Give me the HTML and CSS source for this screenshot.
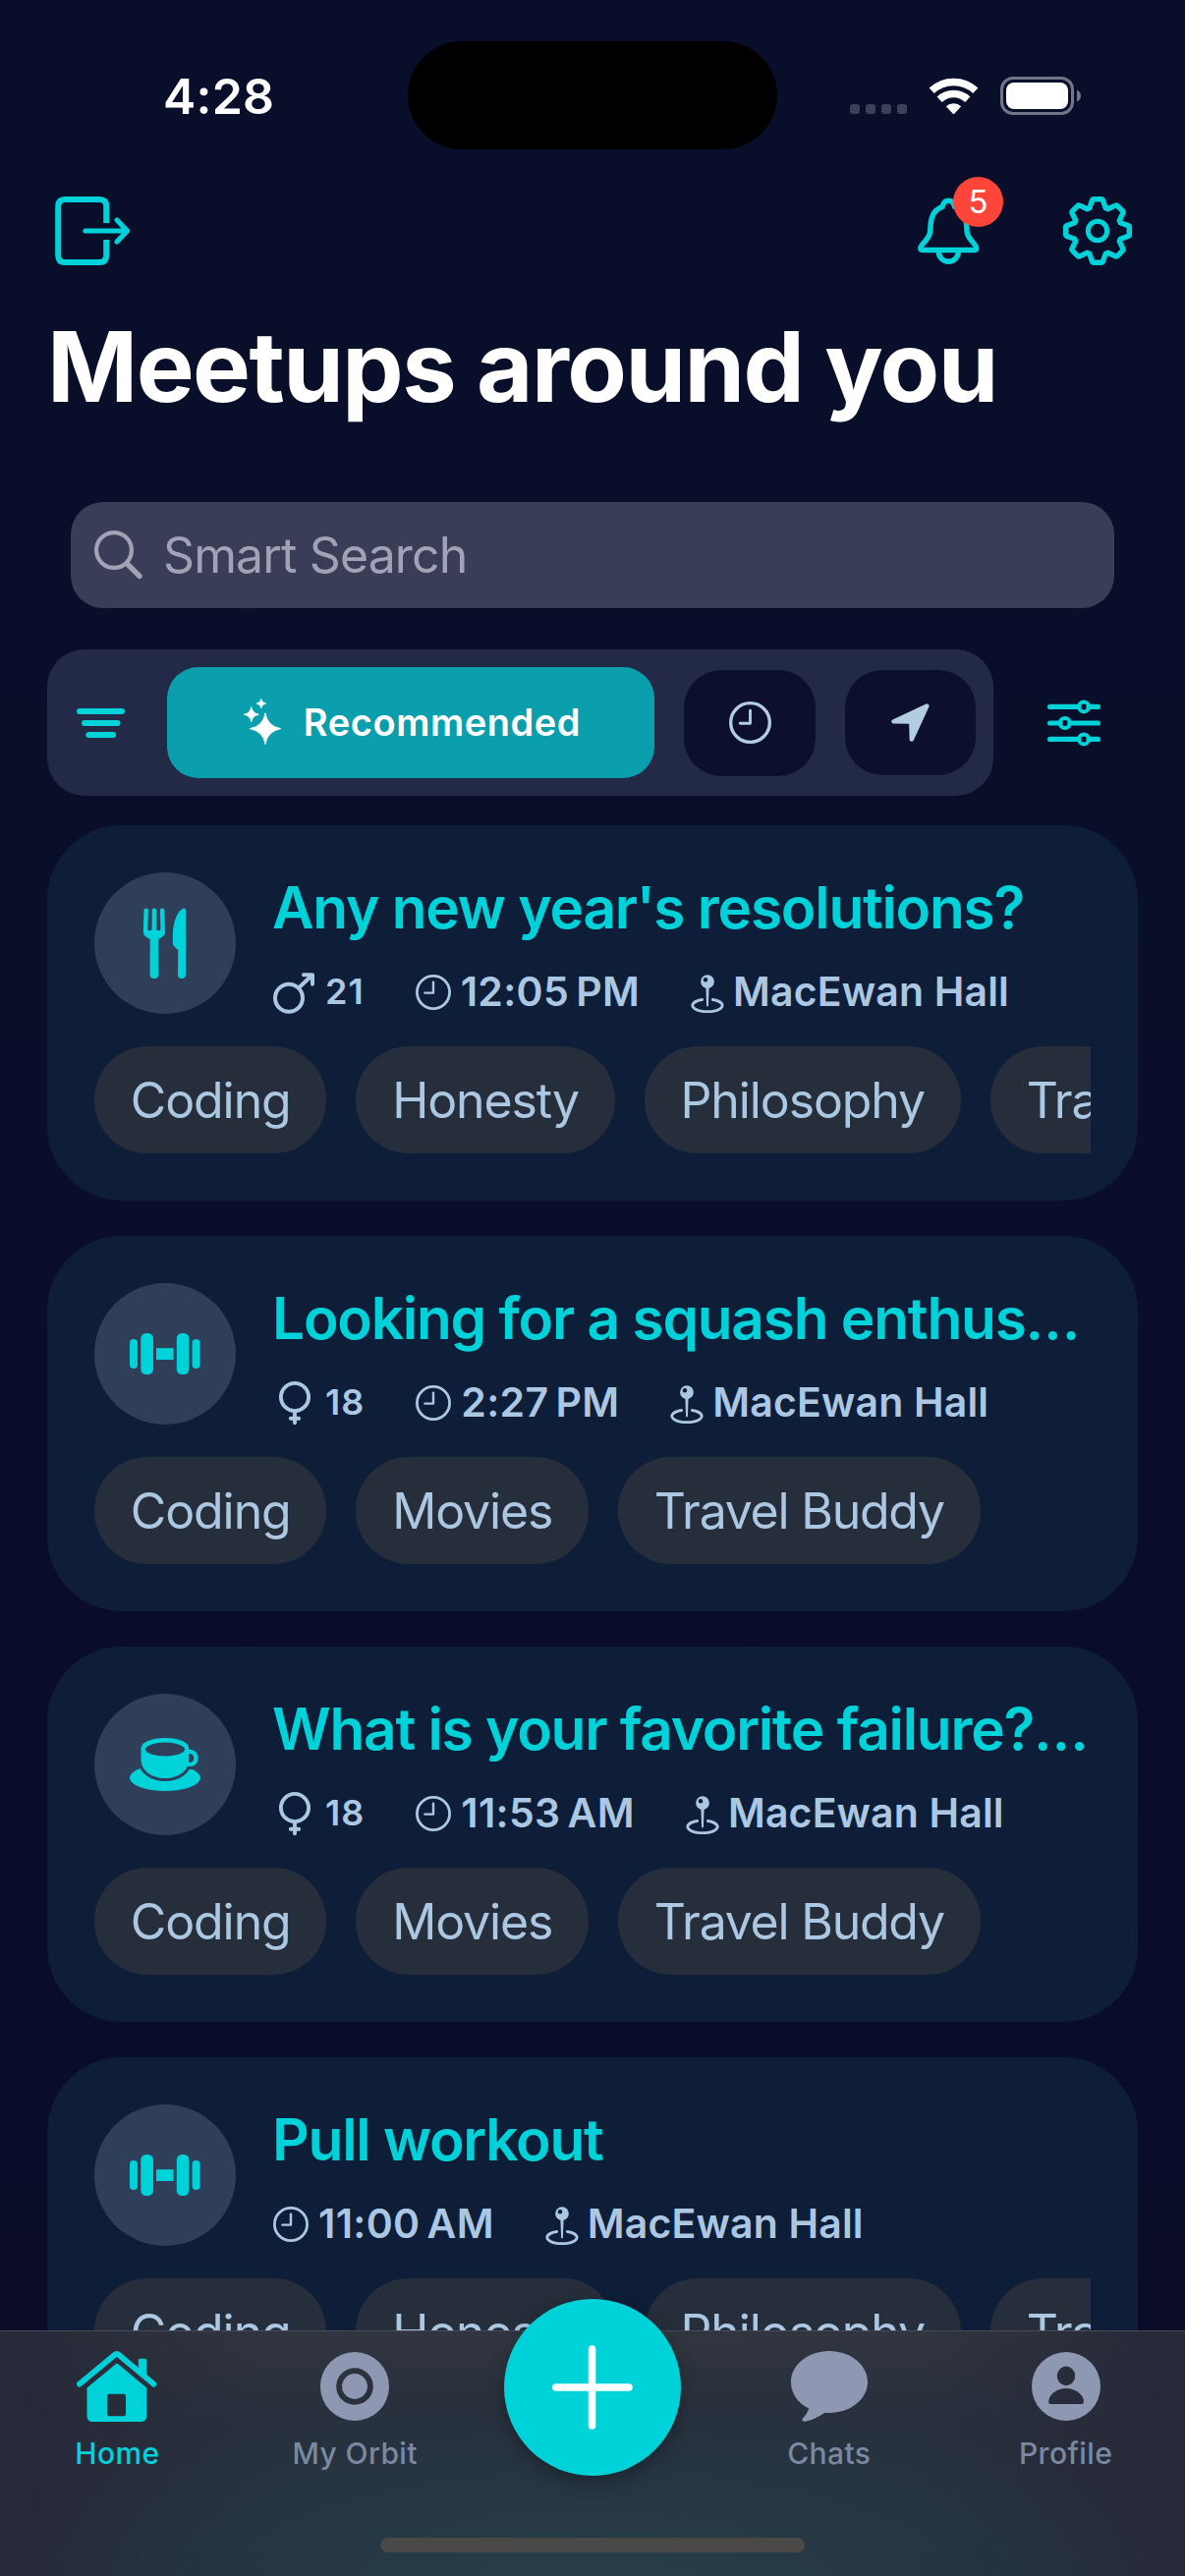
FILE: index.html
```html
<!DOCTYPE html>
<html lang="en">
<head>
<meta charset="utf-8">
<title>Meetups around you</title>
<link rel="stylesheet" href="styles.css">
</head>
<body>
<svg class="sprite" aria-hidden="true">
  <symbol id="clock" viewBox="0 0 36 36"><g fill="none" stroke="currentColor" stroke-width="2.8" stroke-linecap="round" stroke-linejoin="round"><circle cx="18" cy="18" r="16.6"/><path d="M18 7.6V18.6H9.4" stroke-width="2.4"/></g></symbol>
  <symbol id="pin" viewBox="0 0 34 40"><path fill="currentColor" fill-rule="evenodd" d="M17 .2a6.9 6.9 0 1 0 0 13.8a6.9 6.9 0 1 0 0-13.8ZM15 2.9a2.3 2.3 0 1 1 0 4.6a2.3 2.3 0 1 1 0-4.6Z"/><path fill="currentColor" d="M15.4 13h3.2l-.7 19.2h-1.8Z"/><path fill="none" stroke="currentColor" stroke-width="2.8" stroke-linecap="round" d="M11.6 25.5A15.2 6.3 0 1 0 22.4 25.5"/></symbol>
  <symbol id="male" viewBox="0 0 42 50"><g fill="none" stroke="currentColor" stroke-width="4" stroke-linecap="round" stroke-linejoin="round"><circle cx="16" cy="31.8" r="14"/><path d="M26.5 21 39 9.2M31 8.2H40V17.8"/></g></symbol>
  <symbol id="female" viewBox="0 0 42 50"><g fill="none" stroke="currentColor" stroke-width="3.9" stroke-linecap="round"><circle cx="22" cy="20" r="14.1"/><path d="M22 35V46.2M17.8 41.7H26.2"/></g></symbol>
  <symbol id="dumbbell" viewBox="0 0 72 42"><g fill="currentColor"><rect y="6" width="8" height="30" rx="4"/><rect x="11.3" width="12.7" height="42" rx="5.5"/><rect x="27" y="15.2" width="17.6" height="11.8"/><rect x="47.8" width="12.7" height="42" rx="5.5"/><rect x="63.6" y="6" width="8" height="30" rx="4"/></g></symbol>
</svg>

<div class="screen">
  <div class="status">
    <div class="time">4:28</div>
    <div class="island"></div>
    <div class="indicators">
      <svg width="58" height="38" viewBox="0 0 58 38" fill="#3d4058"><rect y="27" width="10" height="10" rx="3"/><rect x="16" y="27" width="10" height="10" rx="3"/><rect x="32" y="27" width="10" height="10" rx="3"/><rect x="48" y="27" width="10" height="10" rx="3"/></svg>
      <svg class="wifi" width="51" height="38" viewBox="0 0 51 38"><g fill="none" stroke="#fff"><path stroke-width="7.6" d="M3.2 13.3A32.8 32.8 0 0 1 47.8 13.3"/><path stroke-width="7.4" d="M11.2 22.2A20.8 20.8 0 0 1 39.8 22.2"/></g><path fill="#fff" d="M17.8 29.2A11.3 11.3 0 0 1 33.2 29.2L26.5 36.6Q25.5 37.6 24.5 36.6Z"/></svg>
      <svg width="82" height="39" viewBox="0 0 82 39"><rect x="1.5" y="1.5" width="72" height="36" rx="11.5" fill="none" stroke="#73768a" stroke-width="3"/><rect x="6" y="6" width="63" height="27" rx="8" fill="#fff"/><path fill="#73768a" d="M78 13.5Q82 15.5 82 19.5T78 25.5Z"/></svg>
    </div>
  </div>

  <div class="toolbar">
    <svg width="80" height="74" viewBox="0 0 80 74" fill="none" stroke="currentColor"><path stroke-width="6" d="M54.2 29V12q0-7-7-7H12.2q-7 0-7 7V62q0 7 7 7H47.2q7 0 7-7V46"/><path stroke-width="5.2" stroke-linecap="round" stroke-linejoin="round" d="M33 37H75.5M65 26 75.5 37 65 48"/></svg>
    <div class="actions">
      <div class="bell">
        <svg width="63" height="70" viewBox="0 0 63 70" fill="none" stroke="currentColor" stroke-width="5.4" stroke-linejoin="round"><path d="M31.3 4.2C27.5 4.2 26 6.5 25 10.5C17 13 13.5 20 13 30C12.8 38 12 40 8 45C5 48.5 2.8 50.5 2.8 52.5Q2.8 54.5 5.5 54.5H57Q59.8 54.5 59.8 52.5C59.8 50.5 57.5 48.5 54.7 45C50.7 40 49.9 38 49.7 30C49.2 20 45.7 13 37.7 10.5C36.7 6.5 35 4.2 31.3 4.2Z"/><path d="M21.3 56C21.3 62 25.8 66.3 31.3 66.3S41.3 62 41.3 56"/></svg>
        <span class="badge">5</span>
      </div>
      <svg width="70" height="70" viewBox="-35 -35 70 70" fill="none" stroke="currentColor" stroke-width="5.4" stroke-linejoin="round"><path d="M-8.3-23.2-5.4-31.2Q-5-32.3-3.8-32.3H3.8Q5-32.3 5.4-31.2L8.3-23.2L10.5-22.3 18.2-25.9Q19.3-26.4 20.1-25.6L25.6-20.1Q26.4-19.3 25.9-18.2L22.3-10.5L23.2-8.3 31.2-5.4Q32.3-5 32.3-3.8V3.8Q32.3 5 31.2 5.4L23.2 8.3L22.3 10.5 25.9 18.2Q26.4 19.3 25.6 20.1L20.1 25.6Q19.3 26.4 18.2 25.9L10.5 22.3L8.3 23.2 5.4 31.2Q5 32.3 3.8 32.3H-3.8Q-5 32.3-5.4 31.2L-8.3 23.2L-10.5 22.3-18.2 25.9Q-19.3 26.4-20.1 25.6L-25.6 20.1Q-26.4 19.3-25.9 18.2L-22.3 10.5L-23.2 8.3-31.2 5.4Q-32.3 5-32.3 3.8V-3.8Q-32.3-5-31.2-5.4L-23.2-8.3L-22.3-10.5-25.9-18.2Q-26.4-19.3-25.6-20.1L-20.1-25.6Q-19.3-26.4-18.2-25.9L-10.5-22.3Z"/><circle r="9.7" stroke-width="5"/></svg>
    </div>
  </div>

  <h1 class="title">Meetups around you</h1>

  <div class="search">
    <svg width="50" height="50" viewBox="0 0 50 50" fill="none" stroke="currentColor" stroke-linecap="round"><circle cx="20" cy="20" r="17.9" stroke-width="4.2"/><path stroke-width="5.4" d="M33.5 34 46 46.4"/></svg>
    <span>Smart Search</span>
  </div>

  <div class="filters">
    <div class="segments">
      <svg class="sort" width="49" height="30" viewBox="0 0 49 30" stroke="currentColor" stroke-width="6" stroke-linecap="round"><path d="M3 3H46M8 15H41.5M12.4 27H37"/></svg>
      <div class="segment active">
        <svg width="39" height="48" viewBox="0 0 39 48" fill="#fff" stroke="#fff" stroke-width=".8" stroke-linejoin="round"><path d="M22 14.8Q24.2 28.2 37.8 30.7Q24.2 33.2 22 46.6Q19.8 33.2 6.2 30.7Q19.8 28.2 22 14.8Z"/><path d="M7.8 8.6Q8.8 15 15.3 16.2Q8.8 17.4 7.8 23.8Q6.8 17.4.3 16.2Q6.8 15 7.8 8.6Z"/><path d="M17.8.5Q18.4 4.4 22.6 5.1Q18.4 5.8 17.8 9.7Q17.2 5.8 13 5.1Q17.2 4.4 17.8.5Z"/></svg>
        <span>Recommended</span>
      </div>
      <div class="segment"><svg width="43" height="43"><use href="#clock"/></svg></div>
      <div class="segment"><svg width="39" height="39" viewBox="0 0 39 39"><path fill="currentColor" stroke="currentColor" stroke-width="4.4" stroke-linejoin="round" d="M36.4 2.6 2.4 18.4 20.3 18.5 20.8 36.6Z"/></svg></div>
    </div>
    <svg class="tune" width="54" height="48" viewBox="0 0 54 48" fill="none" stroke="currentColor" stroke-width="5.2" stroke-linecap="round"><path d="M2.6 7.4H32M42 7.4H51.4M2.6 24H13M23 24H51.4M2.6 40.4H32M42 40.4H51.4"/><g stroke-width="4"><circle cx="37" cy="7.4" r="5"/><circle cx="17.8" cy="24" r="5"/><circle cx="37" cy="40.4" r="5"/></g></svg>
  </div>

  <div class="list">
    <article class="card">
      <div class="head">
        <div class="avatar"><svg width="44" height="72" viewBox="0 0 44 72"><path stroke="currentColor" stroke-width="4.4" stroke-linecap="round" d="M2.7 2.8 2.1 22M10.9 2.8V22M19.1 2.8 19.7 22"/><path fill="currentColor" d="M-.1 20V25q0 4 6.8 7L6.6 68q0 4 4.3 4t4.3-4L15 32q6.9-3 6.9-7V20H17.5V23H13.1V20H8.7V23H4.3V20ZM43 3q0-2.8-2.2-2.4C35 2.5 30 14 29.8 28V36q0 3 5.5 7L35 68q0 4 4 4t4-4Z"/></svg></div>
        <div class="info">
          <h2>Any new year's resolutions?</h2>
          <div class="meta">
            <span class="gender"><svg width="42" height="50"><use href="#male"/></svg>21</span>
            <span class="when"><svg width="36" height="36"><use href="#clock"/></svg>12:05&#8239;PM</span>
            <span class="where"><svg width="34" height="40"><use href="#pin"/></svg>MacEwan Hall</span>
          </div>
        </div>
      </div>
      <div class="chips"><span>Coding</span><span>Honesty</span><span>Philosophy</span><span>Travel Buddy</span></div>
    </article>

    <article class="card">
      <div class="head">
        <div class="avatar"><svg width="72" height="42"><use href="#dumbbell"/></svg></div>
        <div class="info">
          <h2>Looking for a squash enthus…</h2>
          <div class="meta">
            <span class="gender"><svg width="42" height="50"><use href="#female"/></svg>18</span>
            <span class="when"><svg width="36" height="36"><use href="#clock"/></svg>2:27&#8239;PM</span>
            <span class="where"><svg width="34" height="40"><use href="#pin"/></svg>MacEwan Hall</span>
          </div>
        </div>
      </div>
      <div class="chips"><span>Coding</span><span>Movies</span><span>Travel Buddy</span></div>
    </article>

    <article class="card">
      <div class="head">
        <div class="avatar"><svg width="72" height="54" viewBox="0 0 72 54"><ellipse cx="36" cy="40.6" rx="36" ry="13.4" fill="currentColor"/><g fill="none" stroke="#2f3f59" stroke-width="6"><path d="M11.5 11V22C11.5 33 22 41 36 41S60.3 33 60.3 22V11"/><path stroke-width="10" d="M60 27C65 27.5 67.4 24 67.4 20.5"/></g><path fill="none" stroke="currentColor" stroke-width="4.2" d="M59 14.2C64 13 67.4 16 67.4 20.5C67.4 25.5 64 28 58 26.6"/><path fill="currentColor" d="M11.5 11C11.5 4 22 0 36 0S60.3 4 60.3 11V22C60.3 33 50 41 36 41S11.5 33 11.5 22Z"/><ellipse cx="36" cy="11.6" rx="20" ry="7" fill="#2f3f59"/></svg></div>
        <div class="info">
          <h2>What is your favorite failure?…</h2>
          <div class="meta">
            <span class="gender"><svg width="42" height="50"><use href="#female"/></svg>18</span>
            <span class="when"><svg width="36" height="36"><use href="#clock"/></svg>11:53&#8239;AM</span>
            <span class="where"><svg width="34" height="40"><use href="#pin"/></svg>MacEwan Hall</span>
          </div>
        </div>
      </div>
      <div class="chips"><span>Coding</span><span>Movies</span><span>Travel Buddy</span></div>
    </article>

    <article class="card">
      <div class="head">
        <div class="avatar"><svg width="72" height="42"><use href="#dumbbell"/></svg></div>
        <div class="info">
          <h2>Pull workout</h2>
          <div class="meta">
            <span class="when"><svg width="36" height="36"><use href="#clock"/></svg>11:00&#8239;AM</span>
            <span class="where"><svg width="34" height="40"><use href="#pin"/></svg>MacEwan Hall</span>
          </div>
        </div>
      </div>
      <div class="chips"><span>Coding</span><span>Honesty</span><span>Philosophy</span><span>Travel Buddy</span></div>
    </article>
  </div>

  <nav class="tabbar">
    <div class="tabs">
      <div class="tab current">
        <svg width="82" height="72" viewBox="0 0 82 72"><path fill="none" stroke="currentColor" stroke-width="5.8" stroke-linecap="round" stroke-linejoin="round" d="M3 33.6 38.6 4Q40.8 2 43 4L78.4 33.6"/><path fill="currentColor" d="M62.8 9.7q0-2 2-2h4.4q2 0 2 2V28L62.8 21Z"/><path fill="currentColor" fill-rule="evenodd" d="M10.5 37.5 39.5 13.4Q41 12.3 42.5 13.4L71.2 37.5V66q0 6-6 6H16.5q-6 0-6-6ZM33 43.8q-2 0-2 2V64.2q0 2 2 2H48q2 0 2-2V45.8q0-2-2-2Z"/></svg>
        <span>Home</span>
      </div>
      <div class="tab orbit">
        <svg width="70" height="72" viewBox="0 0 70 72"><path fill="currentColor" fill-rule="evenodd" d="M35 1a35 35 0 1 0 0 70a35 35 0 1 0 0-70ZM35 17.2a18.8 18.8 0 1 1 0 37.6a18.8 18.8 0 1 1 0-37.6Z"/><circle cx="35" cy="36" r="12.9" fill="currentColor"/></svg>
        <span>My Orbit</span>
      </div>
      <div class="fab"><svg width="82" height="86" viewBox="0 0 82 86" stroke="#fff" stroke-width="7.6" stroke-linecap="round"><path d="M40.500 4V82M3.800 43H78"/></svg></div>
      <div class="tab">
        <svg width="78" height="72" viewBox="0 0 78 72" fill="currentColor"><path d="M39 0C60.500 0 78 14 78 31.500S60.500 63 39 63L34.500 62.800Q24 70 14.500 71.800Q10.200 72 11.800 68.800Q16.500 64 18.300 58.500C7 53 0 43.500 0 31.500C0 14 17.500 0 39 0Z"/></svg>
        <span>Chats</span>
      </div>
      <div class="tab">
        <svg width="70" height="72" viewBox="0 0 70 72" fill="currentColor"><path fill-rule="evenodd" d="M35 1a35 35 0 1 0 0 70a35 35 0 1 0 0-70ZM35 15.600a9.200 9.800 0 1 1 0 19.600a9.200 9.800 0 1 1 0-19.600ZM19.500 54Q17.200 54 17.200 51.500C17.200 44.500 25 38 35 38S53 44.500 53 51.500Q53 54 50.700 54Z"/></svg>
        <span>Profile</span>
      </div>
    </div>
    <div class="home-indicator"></div>
  </nav>
</div>
</body>
</html>
```
FILE: styles.css
```css
* { box-sizing: border-box; margin: 0; }
body { font-family: Inter, "Liberation Sans", sans-serif; background: #090e29; }
svg { display: block; flex: none; overflow: visible; }
.sprite { position: absolute; width: 0; height: 0; }

.screen {
  position: relative;
  width: 1206px;
  height: 2622px;
  overflow: hidden;
  color: #fff;
  background: linear-gradient(#090f2a, #0a0c28);
}

/* status bar */
.status {
  display: grid;
  grid-template-columns: 1fr 376px 1fr;
  align-items: center;
  height: 152px;
  padding-top: 42px;
}
.time { padding: 2px 0 0 166px; font-size: 50px; font-weight: 600; letter-spacing: .2px; line-height: 60px; }
.island { height: 110px; border-radius: 55px; background: #000; }
.indicators { display: flex; align-items: center; padding: 1px 0 0 74px; }
.wifi { margin: 0 22px 0 22px; }

/* toolbar */
.toolbar {
  display: flex;
  align-items: center;
  justify-content: space-between;
  height: 94px;
  margin-top: 36px;
  padding: 0 54px;
  color: #00d2d9;
}
.actions { display: flex; gap: 85px; }
.bell { position: relative; }
.badge {
  position: absolute;
  left: 36px;
  top: -20px;
  width: 51px;
  height: 51px;
  border-radius: 50%;
  background: #ff453a;
  color: #fff;
  font-size: 33px;
  line-height: 51px;
  text-align: center;
}

.title {
  margin: 41px 48px 0;
  font-size: 99px;
  font-weight: 700;
  line-height: 100px;
  letter-spacing: -1.55px;
  white-space: nowrap;
}

.search {
  display: flex;
  align-items: center;
  gap: 20px;
  height: 108px;
  margin: 88px 72px 0;
  padding: 0 24px;
  border-radius: 33px;
  background: #3a3d57;
  color: #a0a3b5;
  font-size: 50px;
  letter-spacing: -.88px;
}

/* sorting and filtering */
.filters { display: flex; align-items: center; margin: 42px 48px 0; color: #00d2d9; }
.segments {
  display: flex;
  align-items: center;
  gap: 30px;
  width: 963px;
  height: 149px;
  padding: 0 18px 0 30px;
  border-radius: 38px;
  background: #222a48;
}
.sort { margin-right: 13px; }
.segment {
  display: flex;
  align-items: center;
  justify-content: center;
  width: 134px;
  height: 108px;
  border-radius: 38px;
  background: #0c102d;
  color: #b3cde0;
}
.segment:last-child { width: 133px; height: 107px; }
.segment.active {
  gap: 22px;
  width: 496px;
  height: 113px;
  padding: 0 0 1px 3px;
  border-radius: 32px;
  background: #0b9fae;
  color: #fff;
  font-size: 38px;
  font-weight: 600;
  letter-spacing: .56px;
}
.tune { margin-left: 55px; }

/* meetup cards */
.list { display: flex; flex-direction: column; gap: 36px; margin: 30px 48px 0; }
.card { height: 382px; padding: 48px; border-radius: 76px; background: #0e1e38; }
.head { display: flex; gap: 37px; height: 144px; }
.avatar {
  display: flex;
  align-items: center;
  justify-content: center;
  width: 144px;
  height: 144px;
  border-radius: 50%;
  background: #2f3f59;
  color: #00d2d9;
}
.card h2 {
  color: #00d2d9;
  font-size: 58.5px;
  font-weight: 600;
  line-height: 72px;
  letter-spacing: -1.2px;
  white-space: nowrap;
}
.meta {
  display: flex;
  align-items: center;
  gap: 52px;
  height: 50px;
  margin-top: 24px;
  color: #abc7e2;
  font-size: 41px;
  font-weight: 600;
  letter-spacing: .16px;
  white-space: nowrap;
}
.meta span { display: flex; align-items: center; }
.meta .gender { gap: 11px; padding-left: 1px; font-size: 36px; letter-spacing: 1px; }
.when { gap: 10px; letter-spacing: .32px; }
.when:first-child { padding-left: 1px; }
.when svg { margin-top: 2px; }
.where { gap: 9px; }
.where svg { margin-top: 6px; }
.chips { display: flex; gap: 30px; margin-top: 33px; overflow: hidden; }
.chips span {
  flex: none;
  height: 109px;
  padding: 1px 36.800px 0;
  border-radius: 54px;
  background: #262e3b;
  color: #abc7e2;
  font-size: 50px;
  line-height: 108px;
  letter-spacing: -1.1px;
}
.chips span:nth-child(2) { letter-spacing: -1.15px; }
.chips span:last-child { letter-spacing: -1.25px; }

/* tab bar, floating over the list */
.tabbar {
  position: absolute;
  left: 0;
  right: 0;
  bottom: 0;
  height: 250px;
  border-top: 1px solid #474b57;
  background:
    radial-gradient(ellipse 620px 190px at 50% 104%, #263e4a, #263e4a00),
    linear-gradient(90deg, #272838, #27283800 22%, #27283800 78%, #272838),
    linear-gradient(#31353f, #28303d 35%, #25303d);
}
.tabs { display: grid; grid-template-columns: repeat(5, 1fr); padding: 0 1px; justify-items: center; }
.tab {
  display: flex;
  flex-direction: column;
  align-items: center;
  padding-top: 20px;
  color: #8e98b2;
  font-size: 30px;
  font-weight: 500;
  letter-spacing: .4px;
}
.tab span { margin-top: 14px; line-height: 36px; color: #7b88a2; }
.tab.current, .tab.current span { color: #00d2d9; }
.tab:first-child { padding-right: 4px; }
.tab.orbit { padding-right: 2px; }
.fab {
  display: flex;
  align-items: center;
  justify-content: center;
  width: 180px;
  height: 180px;
  margin-top: -33px;
  border-radius: 50%;
  background: #00d2d9;
  box-shadow: 0 6px 18px #00000050;
}
.home-indicator { width: 432px; height: 15px; margin: 63px auto 0; border-radius: 8px; background: #4a4948; }
```
